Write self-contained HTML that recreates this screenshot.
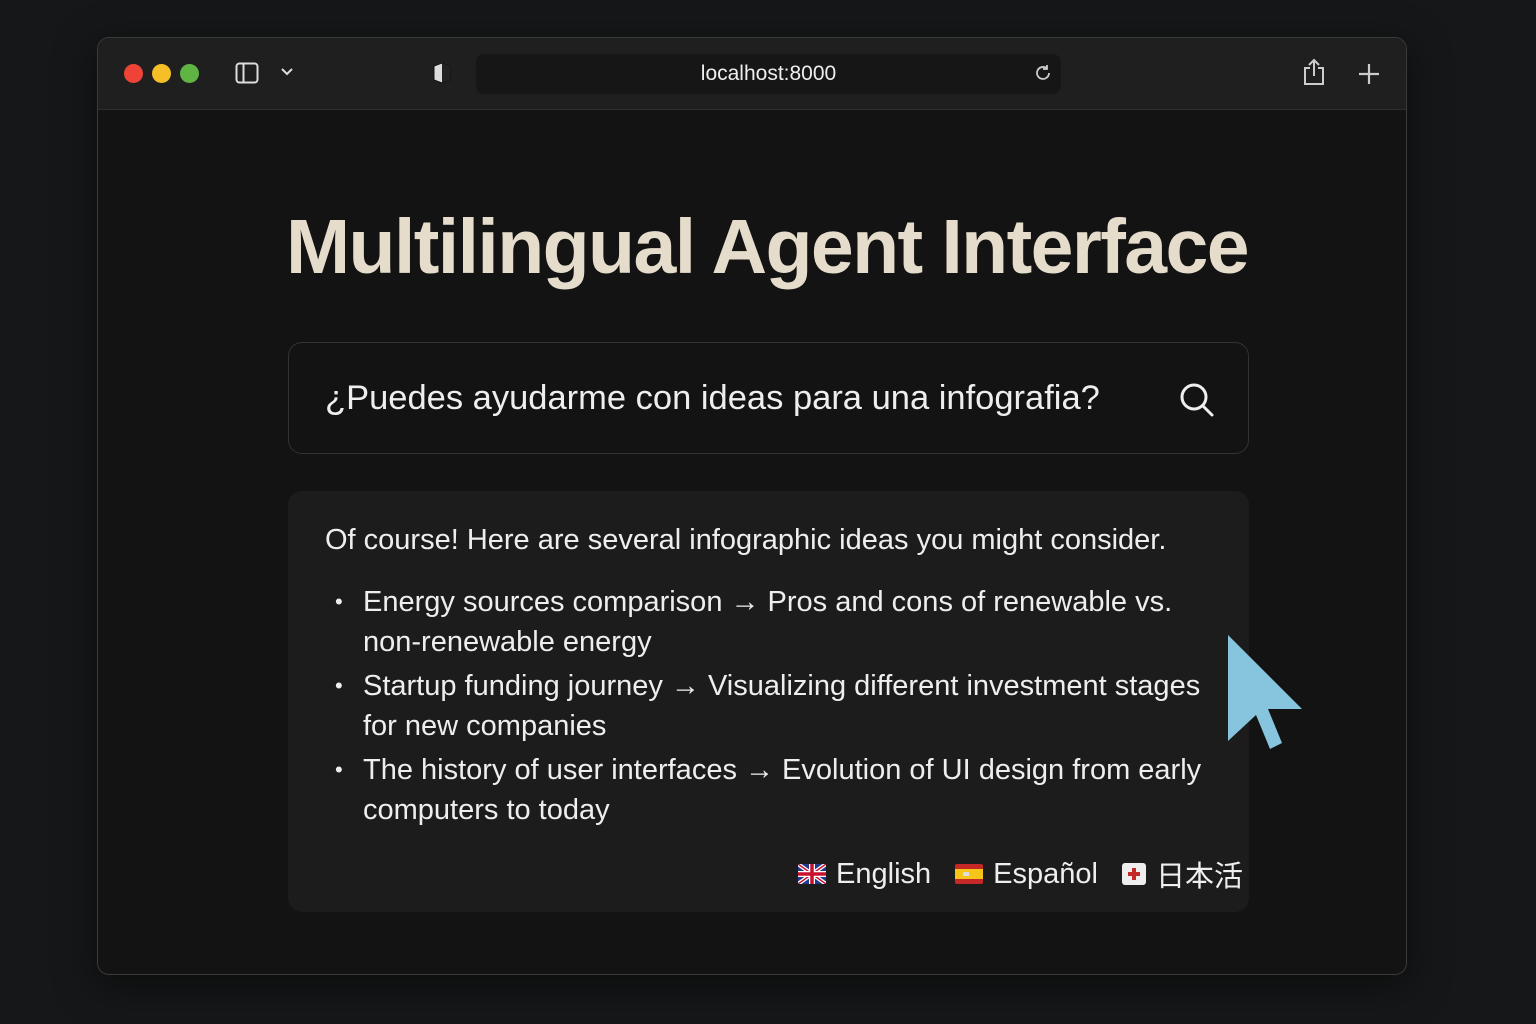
<!DOCTYPE html>
<html><head><meta charset="utf-8"><style>
*{margin:0;padding:0;box-sizing:border-box}
body{width:1536px;height:1024px;background:#161718;font-family:"Liberation Sans","Noto Sans CJK JP",sans-serif;position:relative;overflow:hidden;color:#ece6dc}
.win{position:absolute;left:97px;top:37px;width:1310px;height:938px;background:#131313;border:1px solid #3a3a3a;border-radius:12px;overflow:hidden;box-shadow:0 10px 40px rgba(0,0,0,.5)}
.bar{height:72px;background:#1f1f1f;border-bottom:1px solid #2e2e2e;position:relative}
.dot{position:absolute;top:26px;width:19px;height:19px;border-radius:50%}
.url{position:absolute;left:378px;top:16px;width:585px;height:40px;background:#161616;border-radius:8px;text-align:center;line-height:40px;font-size:21px;color:#eee}
h1{position:absolute;left:188px;top:165px;width:965px;font-size:77px;font-weight:bold;color:#e6dccb;letter-spacing:-1.6px;white-space:nowrap}
.search{position:absolute;left:190px;top:304px;width:961px;height:112px;border:1px solid #333;border-radius:14px}
.search span{position:absolute;left:36px;top:36px;font-size:34.5px;color:#eee;white-space:nowrap}
.resp{position:absolute;left:190px;top:453px;width:961px;height:421px;background:#1c1c1c;border-radius:14px;font-size:29px;color:#eee}
.resp p{position:absolute;left:37px;top:33px;white-space:nowrap}
.resp ul{position:absolute;left:75px;top:91px;width:872px;list-style:none;line-height:40px}
.resp li{position:relative;margin-bottom:4px}
.resp li:before{content:"•";position:absolute;left:-28px;font-size:22px}
.langs{position:absolute;right:6px;top:362px;font-size:29px;display:flex;gap:0;align-items:center}
.flag{display:inline-block;width:28px;height:20px;margin:0 10px 0 24px;vertical-align:middle;border-radius:2px}
</style></head><body>
<div class="win">
 <div class="bar">
  <div class="dot" style="left:26px;background:#ee4437"></div>
  <div class="dot" style="left:54px;background:#f6be27"></div>
  <div class="dot" style="left:82px;background:#5fb443"></div>
  <svg style="position:absolute;left:137px;top:24px" width="24" height="22" viewBox="0 0 24 22"><rect x="1.5" y="1.5" width="21" height="19" rx="3" fill="none" stroke="#ddd" stroke-width="2"/><line x1="8.5" y1="2" x2="8.5" y2="20" stroke="#ddd" stroke-width="2"/></svg>
  <svg style="position:absolute;left:182px;top:29px" width="14" height="10" viewBox="0 0 14 10"><path d="M2 2l5 5 5-5" fill="none" stroke="#ddd" stroke-width="2"/></svg>
  <svg style="position:absolute;left:334px;top:23px" width="20" height="24" viewBox="0 0 20 24"><path d="M10 2 L18 5 V19 L10 22 L2 19 V5Z" fill="#ddd" stroke="#111" stroke-width="1"/><path d="M10 2 V22 L18 19 V5Z" fill="#222"/></svg>
  <div class="url">localhost:8000</div>
  <svg style="position:absolute;left:936px;top:26px" width="18" height="18" viewBox="0 0 18 18"><path d="M15 9a6 6 0 1 1-2-4.5" fill="none" stroke="#ccc" stroke-width="1.8"/><path d="M13 1v4h-4" fill="none" stroke="#ccc" stroke-width="1.8"/></svg>
  <svg style="position:absolute;left:1204px;top:20px" width="24" height="28" viewBox="0 0 24 28"><path d="M8 10H3v16h18V10h-5" fill="none" stroke="#ccc" stroke-width="2"/><path d="M12 18V2M7 7l5-5 5 5" fill="none" stroke="#ccc" stroke-width="2"/></svg>
  <svg style="position:absolute;left:1260px;top:25px" width="22" height="22" viewBox="0 0 22 22"><path d="M11 1v20M1 11h20" stroke="#ccc" stroke-width="2.2"/></svg>
 </div>
 <h1>Multilingual Agent Interface</h1>
 <div class="search"><span>¿Puedes ayudarme con ideas para una infografia?</span>
  <svg style="position:absolute;left:890px;top:39px" width="36" height="36" viewBox="0 0 36 36"><circle cx="15" cy="15" r="12" fill="none" stroke="#eee" stroke-width="3"/><path d="M24 24l9 9" stroke="#eee" stroke-width="3" stroke-linecap="round"/></svg>
 </div>
 <div class="resp">
  <p>Of course! Here are several infographic ideas you might consider.</p>
  <ul>
   <li>Energy sources comparison → Pros and cons of renewable vs.<br>non-renewable energy</li>
   <li>Startup funding journey → Visualizing different investment stages<br>for new companies</li>
   <li>The history of user interfaces → Evolution of UI design from early<br>computers to today</li>
  </ul>
  <div class="langs">
   <svg class="flag" viewBox="0 0 28 20" style="margin-left:0"><rect width="28" height="20" fill="#1f3a8a"/><path d="M0 0L28 20M28 0L0 20" stroke="#fff" stroke-width="4"/><path d="M0 0L28 20M28 0L0 20" stroke="#c8102e" stroke-width="1.5"/><path d="M14 0V20M0 10H28" stroke="#fff" stroke-width="6"/><path d="M14 0V20M0 10H28" stroke="#c8102e" stroke-width="3.5"/></svg>English
   <svg class="flag" viewBox="0 0 28 20"><rect width="28" height="20" fill="#c62828"/><rect y="5" width="28" height="10" fill="#f5c518"/><rect x="8" y="8" width="6" height="4" fill="#ddd"/></svg>Español
   <svg class="flag" viewBox="0 0 24 22" style="width:24px;height:22px"><rect width="24" height="22" rx="3" fill="#eee"/><path d="M12 5v12M6 11h12" stroke="#c62828" stroke-width="4"/></svg>日本活
  </div>
 </div>
</div>
<svg style="position:absolute;left:1226px;top:633px" width="78" height="118" viewBox="0 0 78 118"><path d="M2 2 L76 76 L42 76 L56 110 L44 116 L30 82 L2 108Z" fill="#86c5dd"/></svg>
</body></html>
